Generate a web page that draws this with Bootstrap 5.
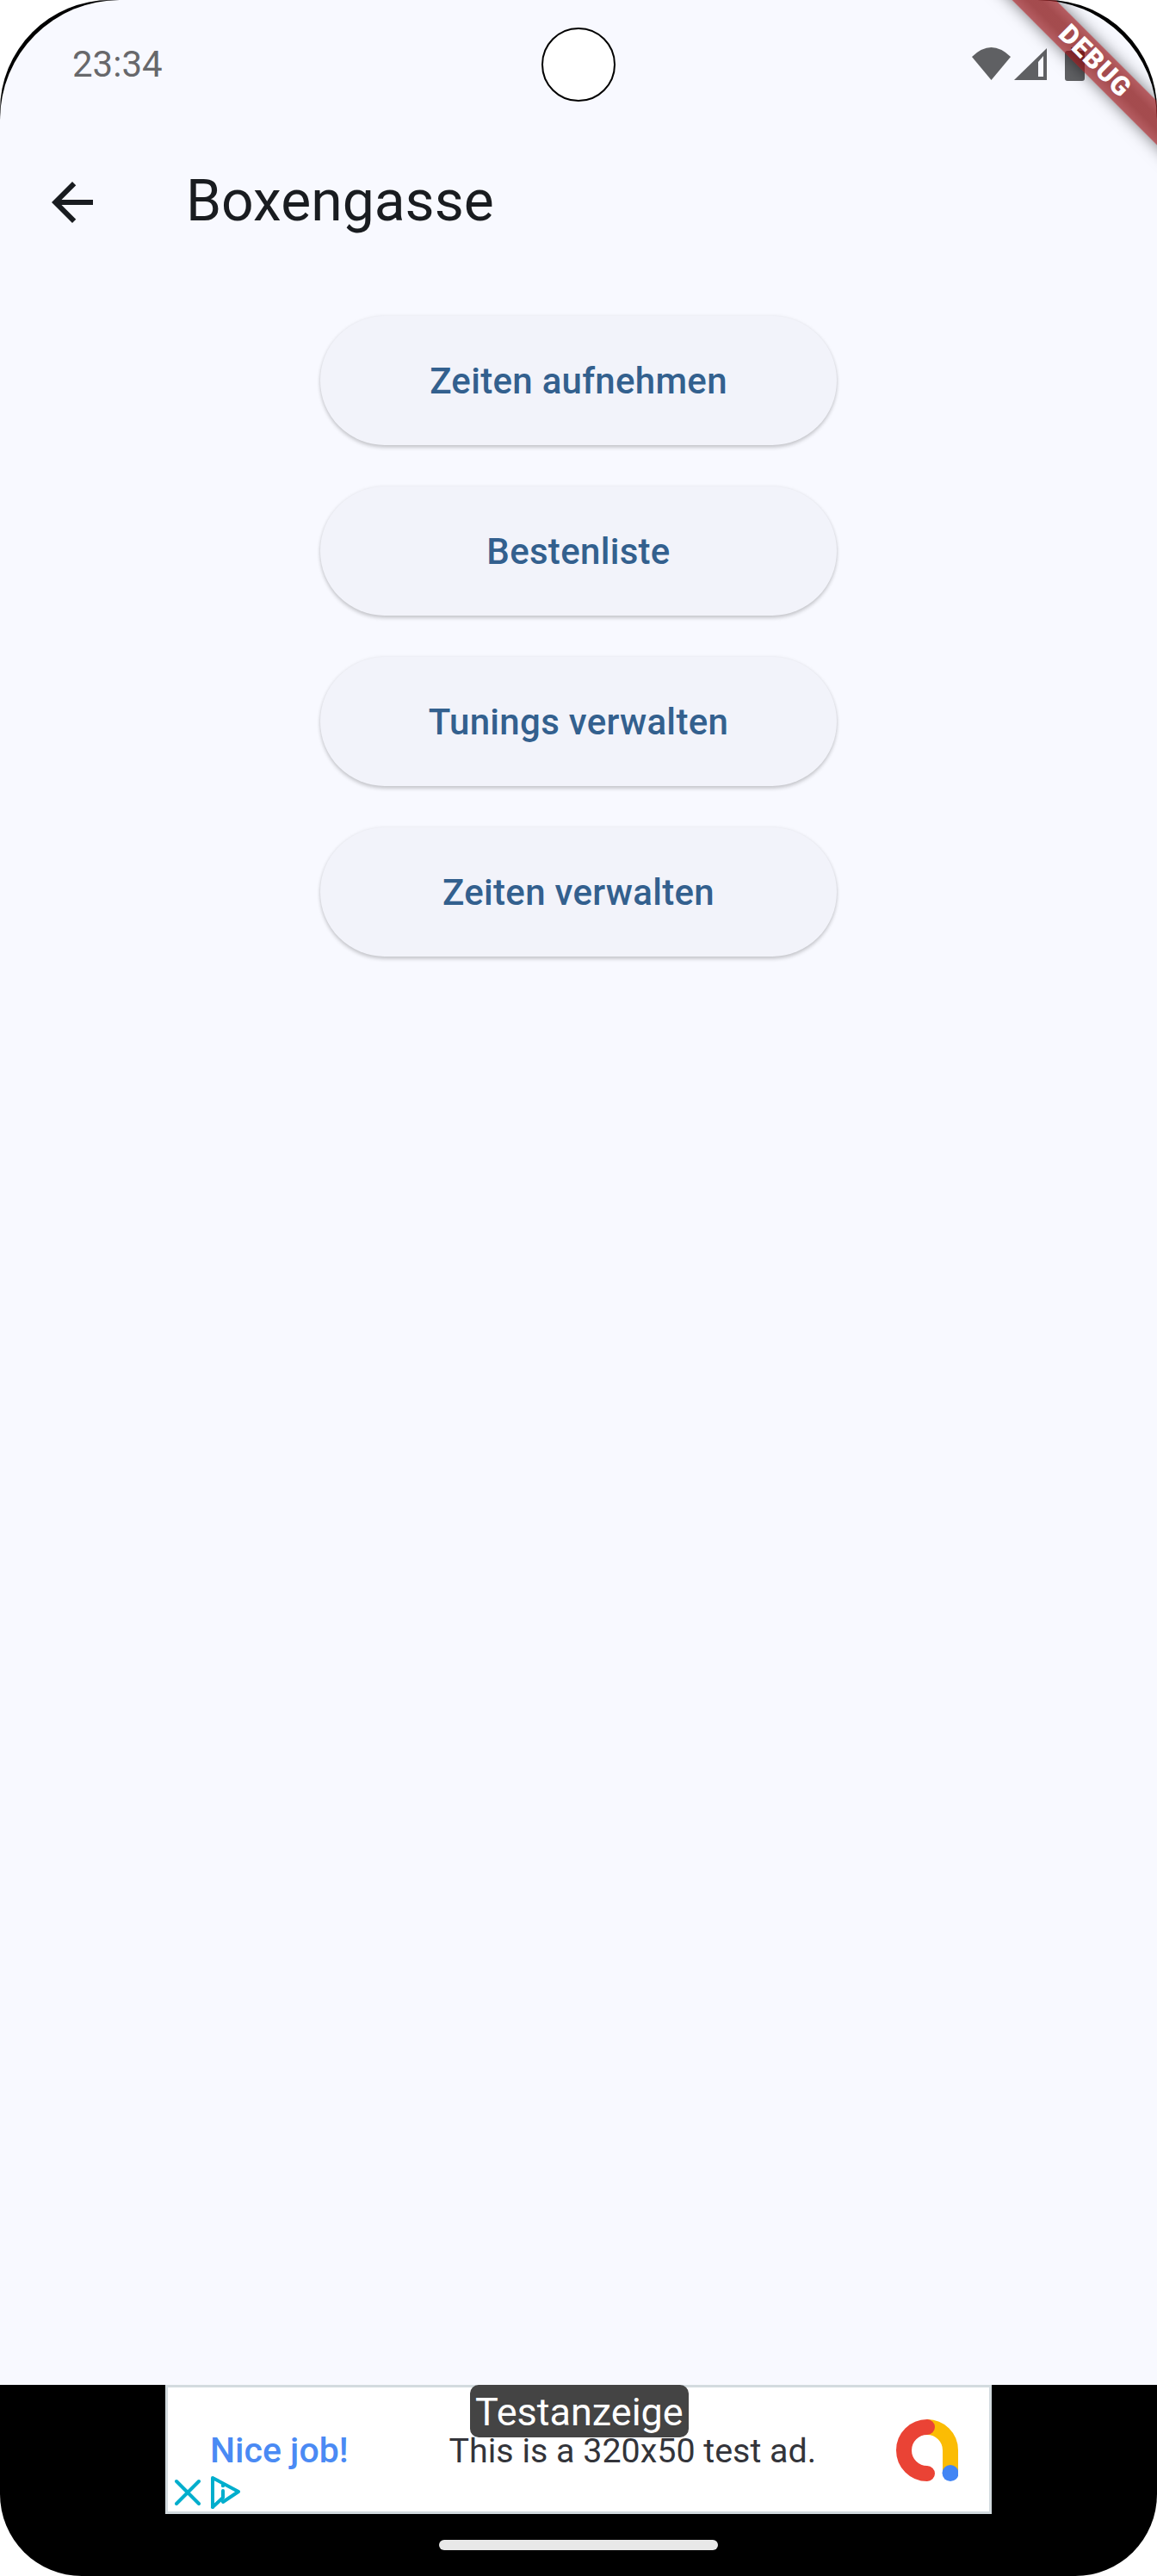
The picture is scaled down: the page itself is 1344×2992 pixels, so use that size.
<!DOCTYPE html>
<html lang="de">
<head>
    <meta charset="UTF-8">
    <meta name="viewport" content="width=device-width, initial-scale=1.0">
    <title>Boxengasse</title>

    <!-- Bootstrap CSS -->
    <link href="https://cdn.jsdelivr.net/npm/bootstrap@5.3.0/dist/css/bootstrap.min.css" rel="stylesheet">

    <!-- Custom Styles -->
    <style>
        body {
            background-color: #fff;
            font-family: Roboto, sans-serif;
        }
        .phone-frame {
            width: 1344px;
            height: 2992px;
            background-color: #000;
            border-radius: 128px 128px 95px 95px;
        }
        .phone-screen {
            background-color: #f8f9ff;
            border-radius: 139px 139px 0 0;
        }
        .status-row {
            height: 151px;
            padding: 51px 84px 0 84px;
        }
        .status-time {
            font-size: 42px;
            line-height: 48px;
            color: #67686b;
        }
        .status-icons {
            margin-top: 4px;
        }
        .camera-hole {
            top: 32px;
            left: 629px;
            width: 86px;
            height: 86px;
            background-color: #fff;
            border: 2px solid #000;
        }
        .debug-ribbon {
            top: 53px;
            left: 1072px;
            width: 400px;
            height: 36px;
            transform: rotate(45deg);
            background: linear-gradient(rgba(150, 20, 24, .68), rgba(129, 2, 3, .7) 35%, rgba(129, 2, 3, .7) 65%, rgba(150, 20, 24, .68));
            box-shadow: 0 0 18px rgba(0, 0, 0, .5);
            color: #fff;
            font-size: 31px;
            line-height: 36px;
            font-weight: 900;
            letter-spacing: 1px;
        }
        .app-row {
            height: 168px;
            padding-left: 48px;
            gap: 96px;
        }
        .app-title {
            margin-top: -3px;
            font-size: 66px;
            color: #191c20;
        }
        .action-list {
            padding-top: 48px;
            gap: 48px;
        }
        .action-btn {
            width: 600px;
            height: 150px;
            background-color: #f2f3fa;
            color: #33608e;
            font-size: 42px;
            font-weight: 500;
            letter-spacing: .3px;
            border: 0;
            box-shadow: 0 3px 4px rgba(0, 0, 0, .18), 0 0 4px rgba(0, 0, 0, .07);
        }
        .ad-bar {
            height: 222px;
        }
        .ad-box {
            width: 960px;
            height: 150px;
            padding-left: 49px;
            padding-right: 36px;
            background-color: #fff;
            border: 3px solid #d3dbdf;
        }
        .ad-headline {
            margin-top: 3px;
            font-size: 41px;
            font-weight: 500;
            color: #4a8af4;
        }
        .ad-copy {
            margin-top: 3px;
            margin-left: 117px;
            font-size: 39.4px;
            color: #33343a;
        }
        .ad-tag {
            top: -3px;
            left: 351px;
            padding: 0 6px;
            height: 61px;
            background-color: #444;
            border-radius: 10px;
            color: #fff;
            font-size: 45px;
            line-height: 64px;
        }
        .ad-marks {
            top: 103px;
            left: 8px;
        }
        .home-bar {
            width: 324px;
            height: 12px;
            margin-top: 30px;
            background-color: #e8e8e8;
        }
    </style>
</head>
<body class="m-0">
    <div class="phone-frame d-flex flex-column overflow-hidden position-relative">
        <!-- App screen -->
        <div class="phone-screen flex-grow-1 d-flex flex-column">
            <div class="status-row d-flex justify-content-between align-items-start">
                <span class="status-time">23:34</span>
                <svg class="status-icons" width="131" height="40" viewBox="0 0 131 40">
                    <path fill="#5f6063" d="M22.5 38 0 11Q22.5-11 45 11Z"/>
                    <path fill="#5f6063" d="M49 38 87 1V38Z"/>
                    <path fill="#f8f9ff" d="M77 17 83 10V34H77Z"/>
                    <path fill="#5f6063" d="M115 0h9v4h4a3 3 0 0 1 3 3v29a3 3 0 0 1-3 3h-17a3 3 0 0 1-3-3V7a3 3 0 0 1 3-3h4Z"/>
                </svg>
            </div>

            <div class="app-row d-flex align-items-center">
                <svg width="72" height="72" viewBox="0 0 24 24">
                    <path fill="#191c20" d="M20 11H7.83l5.59-5.59L12 4l-8 8 8 8 1.41-1.41L7.83 13H20v-2z"/>
                </svg>
                <span class="app-title">Boxengasse</span>
            </div>

            <div class="action-list d-flex flex-column align-items-center">
                <button type="button" class="action-btn btn rounded-pill p-0">Zeiten aufnehmen</button>
                <button type="button" class="action-btn btn rounded-pill p-0">Bestenliste</button>
                <button type="button" class="action-btn btn rounded-pill p-0">Tunings verwalten</button>
                <button type="button" class="action-btn btn rounded-pill p-0">Zeiten verwalten</button>
            </div>
        </div>

        <!-- Ad banner -->
        <div class="ad-bar flex-shrink-0 d-flex flex-column align-items-center">
            <div class="ad-box d-flex align-items-center position-relative">
                <span class="ad-headline">Nice job!</span>
                <span class="ad-copy">This is a 320x50 test ad.</span>
                <svg class="ms-auto" width="73" height="73" viewBox="0 0 73 73" fill="none">
                    <path stroke="#fbbc04" stroke-width="18" d="M37 10A27 27 0 0 1 64 37V64"/>
                    <path stroke="#ea4335" stroke-width="18" stroke-linecap="round" d="M37 10A27 27 0 0 0 37 64"/>
                    <circle cx="64" cy="63.5" r="9.5" fill="#4285f4"/>
                </svg>
                <span class="ad-tag position-absolute">Testanzeige</span>
                <svg class="ad-marks position-absolute" width="80" height="40" viewBox="0 0 80 40" fill="none" stroke="#00aecd" stroke-width="4" stroke-linecap="round" stroke-linejoin="round">
                    <path d="M2 6 28 32M28 6 2 32"/>
                    <path d="M44 36V2L74 18 56 30"/>
                    <path d="M56 17V25L44 36"/>
                    <circle cx="56" cy="11" r="1.2" fill="#00aecd" stroke-width="2"/>
                </svg>
            </div>
            <div class="home-bar rounded-pill"></div>
        </div>

        <!-- Overlays -->
        <div class="camera-hole position-absolute rounded-circle"></div>
        <div class="debug-ribbon position-absolute text-center">DEBUG</div>
    </div>

    <!-- Bootstrap JS Bundle with Popper -->
    <script src="https://cdn.jsdelivr.net/npm/bootstrap@5.3.0/dist/js/bootstrap.bundle.min.js"></script>
</body>
</html>
